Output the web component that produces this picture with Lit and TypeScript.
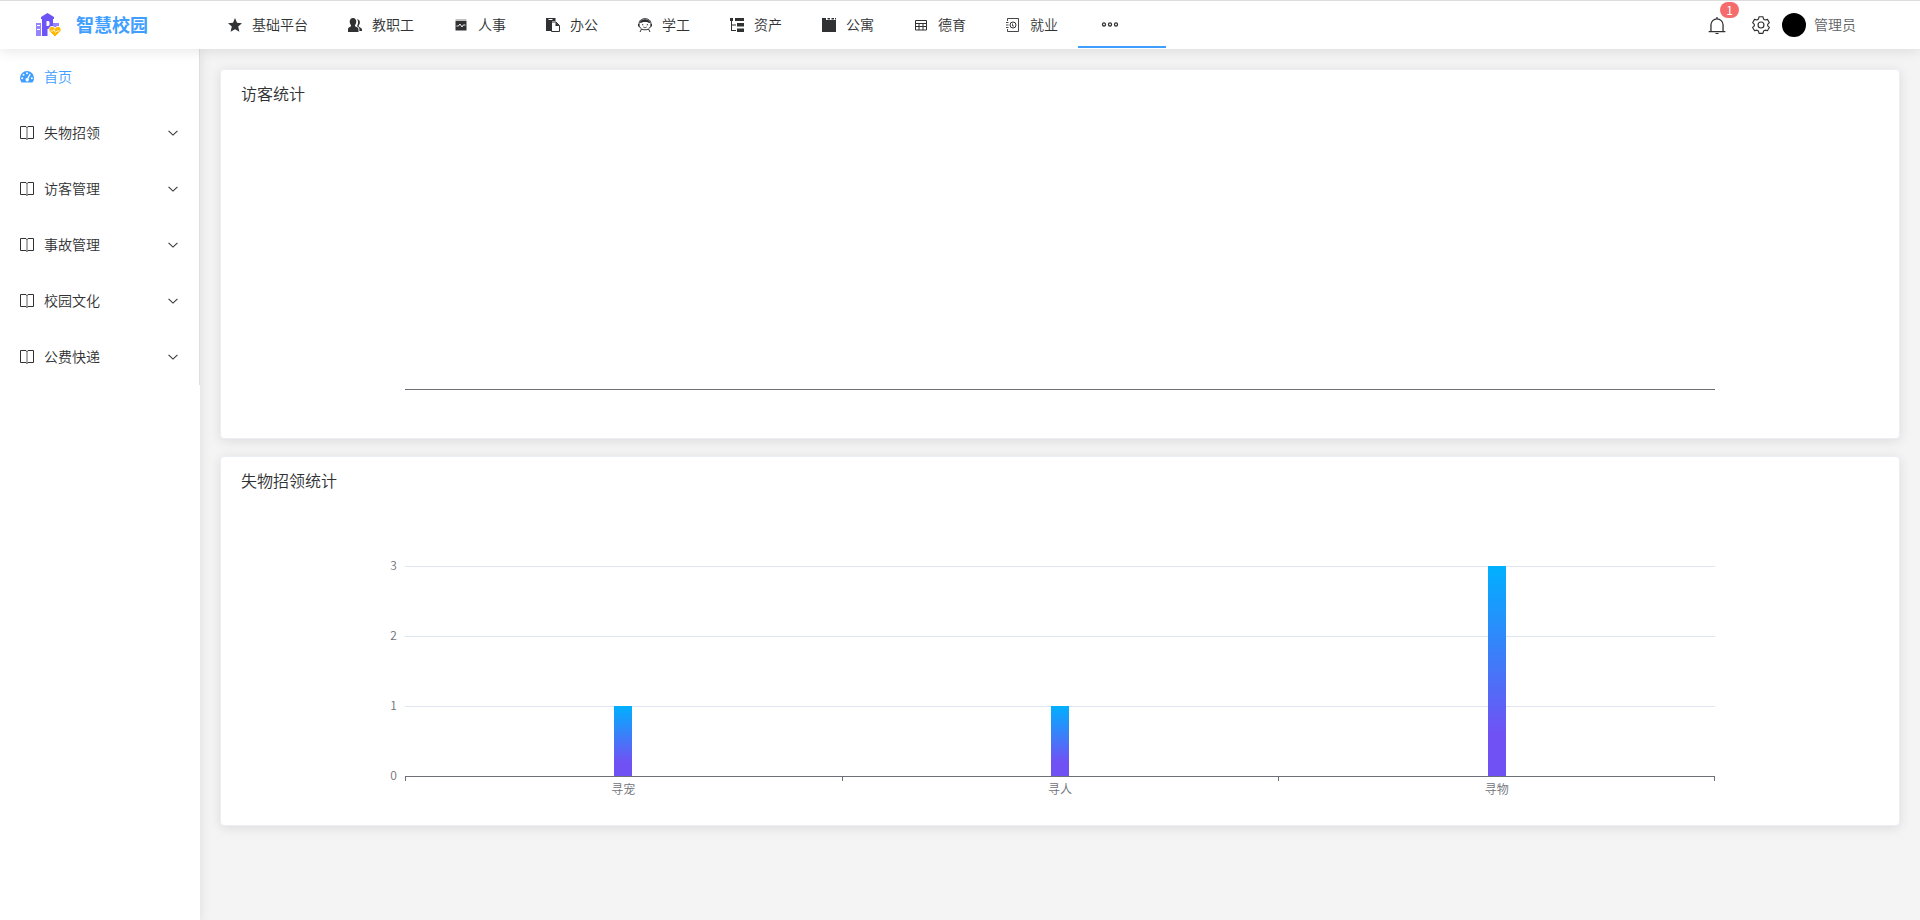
import { LitElement, html, css, svg, nothing } from "lit";
import { customElement, property } from "lit/decorators.js";

/* Icon shapes on a 14 x 14 grid */
const icons: Record<string, unknown> = {
  star: svg`<path fill="currentColor" d="M7 0l2 4.700 5 .5-3.800 3.300 1.200 5.300L7 11.200 2.600 13.800l1.200-5.300L0 5.200l5-.5z"/>`,
  users: svg`<path fill="currentColor" d="M5 0c2 0 3.300 1.500 3.300 3.600 0 1.500-.6 2.800-1.300 3.600v1l2.600 1.300c.6.4.9 1 .9 1.800V14H0v-2.700c0-.8.300-1.400.9-1.800L3 8.200v-1C2.200 6.400 1.700 5.100 1.700 3.600 1.700 1.500 3 0 5 0z"/><path fill="currentColor" d="M8.600 1.200c2 0 3.300 1 3.300 3.100 0 1.400-.5 2.500-1.200 3.200v1l2.300 1.400c.6.400 1 1 1 1.700V13h-2.600v-1.700c0-1.200-.6-2-1.500-2.500l-1-.6c.8-1.200 1.200-2.600 1.200-4.100 0-1.100-.4-2.200-1.500-2.900z"/>`,
  monitor: svg`<path fill="currentColor" opacity=".6" d="M1.500 1.500h11v1h-11z"/><path fill="currentColor" d="M1.500 3h11v9.500h-11z"/><path fill="none" stroke="#fff" stroke-width=".9" d="M2.500 8h2l1.500-2 2 3 1.200-2h2.300"/>`,
  copy: svg`<path fill="currentColor" d="M0 0h9.500v3H6v10H0z"/><path stroke="#fff" d="M2.500 1.500h4"/><path fill="#fff" stroke="currentColor" d="M5.500 4h4.500l3.500 3.500v6h-8z"/><path fill="currentColor" d="M9.500 4l4 4h-4z"/>`,
  student: svg`<path fill="none" stroke="currentColor" d="M3.500 11C1.800 9.800 1 8 1 6 1 2.500 3.500.7 7 .7S13 2.500 13 6c0 2-.8 3.800-2.500 5-2 1.100-5 1.100-7 0zM3.500 11l-1.500 3M10.500 11l1.500 3"/><path fill="currentColor" d="M1.500 4.500C3 0 11 0 12.500 4.500L11 5 9 4H5L3 5zM4 6.300h1.300v1H4zM8.700 6.300H10v1H8.700zM0 6h1.200v2.500H0zM12.800 6H14v2.500h-1.200z"/><path fill="none" stroke="currentColor" stroke-width=".8" d="M5.300 9c1 .7 2.400.7 3.400 0"/>`,
  tree: svg`<path fill="currentColor" d="M0 0h3v3H2v3.500h4v1H2V12h4v1H1V3H0zM5 0h9v3H5zM7 5h7v3.500H7zM7 10.500h7V14H7z"/>`,
  building: svg`<path fill="currentColor" d="M0 0h4v2h10v12H0z"/><path fill="currentColor" d="M5.500 0H8v1.500H5.500zM9.500 0H12v1.500H9.500zM13 0h1v1.500h-1z"/>`,
  grid: svg`<path fill="none" stroke="currentColor" d="M1.500 2.500h11v9.500h-11zM1.500 5.500h11M1.500 8.500h11M5 5.500V12M9 5.500V12"/>`,
  contacts: svg`<path fill="none" stroke="currentColor" stroke-width=".9" d="M1.500 3V.5h11v13h-11V11M0 4.500h2.500M0 7h2.500M0 9.500h2.500"/><circle cx="7" cy="7" r="3" fill="none" stroke="currentColor"/><path fill="none" stroke="currentColor" stroke-width=".8" d="M6.500 5.500V8H8"/>`,
  dots: svg`<g fill="none" stroke="currentColor" stroke-width="1.100"><circle cx="1.750" cy="7.400" r="1.350"/><circle cx="7" cy="7.400" r="1.350"/><circle cx="12.250" cy="7.400" r="1.350"/></g>`,
  gauge: svg`<path fill="currentColor" d="M7 1a7 7 0 0 1 7 7c0 1.800-.6 3.300-1.500 4.500h-11A7 7 0 0 1 0 8a7 7 0 0 1 7-7z"/><g fill="#fff"><circle cx="7" cy="3.300" r="1"/><circle cx="3.500" cy="4.800" r="1"/><circle cx="2.200" cy="8.300" r="1"/><circle cx="11.800" cy="8.300" r="1"/><path d="M9.700 3.800l1 .6-2.200 4.200a1.700 1.700 0 1 1-1.300-.6z"/></g>`,
  book: svg`<path fill="none" stroke="currentColor" d="M6 .5H.5v12H6l1 1 1-1h5.500V.5H8l-1 1-1-1"/><path stroke="currentColor" stroke-width="1.500" opacity=".5" d="M7 1v12.500"/>`,
  chevron: svg`<path fill="none" stroke="currentColor" stroke-width="1.200" d="M1.800 4.500L7 9.500l5.200-5"/>`,
  bell: svg`<path fill="none" stroke="currentColor" d="M.5 12.100h13M2.300 12V6.900a4.700 4.700 0 0 1 9.400 0V12M7 .8V2"/><path fill="none" stroke="currentColor" stroke-width=".8" d="M5.800 13.600h2.400"/>`,
  gear: svg`<path fill="none" stroke="currentColor" stroke-width=".9" stroke-linejoin="round" d="M5.500.6h3l.5 1.800 1.200.7 1.800-.5 1.500 2.600-1.300 1.300v1.200l1.300 1.200-1.500 2.600-1.800-.5-1.200.7-.5 1.800h-3L5 11.700 3.800 11l-1.800.5L.5 8.900l1.300-1.200V6.500L.5 5.200 2 2.600l1.800.5L5 2.400z"/><circle cx="7" cy="7" r="2.300" fill="none" stroke="currentColor" stroke-width=".9"/>`,
};

@customElement("app-icon")
class AppIcon extends LitElement {
  @property() name = "";
  @property({ type: Number }) size = 14;
  static styles = css`
    :host { display: inline-flex; flex: none; }
    svg { display: block; overflow: visible; }
  `;
  render() {
    return html`<svg width=${this.size} height=${this.size} viewBox="0 0 14 14" aria-hidden="true">${icons[this.name]}</svg>`;
  }
}

type Datum = { label: string; value: number };

@customElement("bar-chart")
class BarChart extends LitElement {
  @property({ attribute: false }) data: Datum[] = [];
  static styles = css`
    :host { display: block; padding: 0 20px; }
    .chart { padding: 75px 10% 0; }
    .plot { display: grid; grid-template-rows: repeat(3, 70px); border-bottom: 1px solid #6e7079; position: relative; }
    .row { position: relative; border-top: 1px solid #e0e6f1; box-sizing: border-box; }
    .empty .row { border-color: transparent; }
    .tick, .zero { position: absolute; right: calc(100% + 8px); font-size: 12px; line-height: 16px; }
    .tick { top: -10px; }
    .zero { bottom: -7px; }
    .bars { position: absolute; inset: 0; display: flex; }
    .slot { flex: 1; display: flex; align-items: flex-end; justify-content: center; }
    .bar { width: 18px; background: linear-gradient(#00b0ff, #7052f4 80%, #7052f4); }
    .labels { display: flex; font-size: 12px; line-height: 16px; }
    .label { flex: 1; text-align: center; padding-top: 4px; position: relative; }
    .label::before, .label:last-child::after { content: ""; position: absolute; top: 0; left: 0; width: 1px; height: 4px; background: #6e7079; }
    .label:last-child::after { left: auto; right: 0; }
  `;
  render() {
    const has = this.data.length > 0;
    return html`
      <div class="chart">
        <div class="plot ${has ? "" : "empty"}">
          ${[3, 2, 1].map((n) => html`<div class="row">${has ? html`<span class="tick">${n}</span>` : nothing}</div>`)}
          ${has ? html`<span class="zero">0</span>` : nothing}
          <div class="bars">
            ${this.data.map((d) => html`<div class="slot"><div class="bar" style="height:${(d.value / 3) * 100}%"></div></div>`)}
          </div>
        </div>
        <div class="labels">${this.data.map((d) => html`<span class="label">${d.label}</span>`)}</div>
      </div>
    `;
  }
}

@customElement("app-root")
class AppRoot extends LitElement {
  static styles = css`
    :host {
      display: flex; flex-direction: column; min-height: 100vh; background: #f4f4f4; color: #303133;
      font-family: "Noto Sans CJK SC", sans-serif; font-weight: 350; font-size: 14px; line-height: 20px;
    }
    a { color: inherit; text-decoration: none; }
    button { font: inherit; color: inherit; background: none; border: 0; padding: 0; cursor: pointer; }
    header {
      display: flex; height: 49px; box-sizing: border-box; border-top: 1px solid #dcdcdc; background: #fff;
      box-shadow: 0 2px 12px rgba(0, 0, 0, 0.1); position: relative; z-index: 2;
    }
    .text { padding-bottom: 2px; }
    .brand { width: 208px; box-sizing: border-box; padding-left: 35px; display: flex; align-items: center; gap: 15px; color: #409eff; font-size: 18px; font-weight: 700; }
    .top { display: flex; flex: 1; }
    .top a, .more { display: flex; align-items: center; gap: 10px; height: 47px; box-sizing: border-box; padding: 0 20px; white-space: nowrap; }
    .more { width: 88px; padding: 0 24px; border-bottom: 2px solid #409eff; }
    .tools { display: flex; align-items: center; padding-right: 64px; }
    .notice { position: relative; display: flex; margin-right: 26px; }
    .badge { position: absolute; left: 12px; bottom: 16px; width: 19px; height: 16px; border-radius: 8px; background: #f56c6c; color: #fff; font-size: 12px; line-height: 16px; text-align: center; font-weight: 400; }
    .setting { display: flex; margin-right: 12px; }
    .user { display: flex; align-items: center; gap: 8px; color: #606266; }
    .avatar { width: 24px; height: 24px; border-radius: 50%; background: #000; }
    .body { display: flex; flex: 1; }
    aside { width: 200px; flex: none; background: #fff; box-shadow: 0 2px 12px rgba(0, 0, 0, 0.1); }
    .side { border-right: 1px solid #dcdfe6; display: flex; flex-direction: column; }
    .side a, .side button { height: 56px; padding: 0 20px; display: flex; align-items: center; gap: 10px; text-align: left; }
    .side .text { flex: 1; }
    .side .on { color: #409eff; }
    main { flex: 1; min-width: 0; padding: 20px; display: flex; flex-direction: column; gap: 17px; }
    .card { background: #fff; border: 1px solid #ebeef5; border-radius: 4px; box-shadow: 0 2px 12px rgba(0, 0, 0, 0.1); padding-bottom: 28px; min-height: 370px; box-sizing: border-box; color: #6e7079; }
    h2 { margin: 0; padding: 13px 20px 1px; font-size: 16px; font-weight: inherit; line-height: 20px; color: #303133; }
  `;

  private top = [
    ["star", "基础平台"], ["users", "教职工"], ["monitor", "人事"], ["copy", "办公"], ["student", "学工"],
    ["tree", "资产"], ["building", "公寓"], ["grid", "德育"], ["contacts", "就业"],
  ];
  private side = ["失物招领", "访客管理", "事故管理", "校园文化", "公费快递"];
  private found: Datum[] = [
    { label: "寻宠", value: 1 }, { label: "寻人", value: 1 }, { label: "寻物", value: 3 },
  ];

  render() {
    return html`
      <header>
        <a class="brand" href="#">
          <svg width="26" height="24" viewBox="0 0 26 24" aria-hidden="true">
            <path fill="#9484ff" d="M1 10h5v13H1zM18 10h6v4h-6z"/>
            <path fill="#fff" d="M2 12h3v1H2zM2 16h3v1H2z"/>
            <path fill="#6c54f7" d="M12.500 0L19 4v2h-1v8l-3 3v6H7V6H6V4z"/>
            <path fill="#fff" d="M11.500 8h2l1 1v3l-1 1h-2zM12.500 16H15v7h-2.500z"/>
            <path fill="#ffb800" stroke="#fff" d="M20 24l-5.500-5.500c-1.500-2 0-5 2.500-5 1.500 0 2.500.8 3 1.800.5-1 1.500-1.800 3-1.800 2.500 0 4 3 2.500 5z"/>
            <path fill="none" stroke="#fff" stroke-width=".8" d="M15.500 18h2.500l1-1.500 1.500 3 1.500-1.500h2.500"/>
          </svg>
          <span class="text">智慧校园</span>
        </a>
        <nav class="top" aria-label="主导航">
          ${this.top.map(([i, t]) => html`<a href="#"><app-icon name=${i}></app-icon><span class="text">${t}</span></a>`)}
          <button class="more" aria-label="更多"><app-icon name="dots" size="16"></app-icon></button>
        </nav>
        <div class="tools">
          <button class="notice" aria-label="通知"><app-icon name="bell" size="18"></app-icon><span class="badge">1</span></button>
          <button class="setting" aria-label="设置"><app-icon name="gear" size="18"></app-icon></button>
          <button class="user"><span class="avatar"></span><span class="text">管理员</span></button>
        </div>
      </header>
      <div class="body">
        <aside>
          <nav class="side" aria-label="侧边导航">
            <a class="on" href="#"><app-icon name="gauge"></app-icon><span class="text">首页</span></a>
            ${this.side.map((t) => html`<button><app-icon name="book"></app-icon><span class="text">${t}</span><app-icon name="chevron" size="12"></app-icon></button>`)}
          </nav>
        </aside>
        <main>
          <section class="card"><h2>访客统计</h2><bar-chart></bar-chart></section>
          <section class="card"><h2>失物招领统计</h2><bar-chart .data=${this.found}></bar-chart></section>
        </main>
      </div>
    `;
  }
}
